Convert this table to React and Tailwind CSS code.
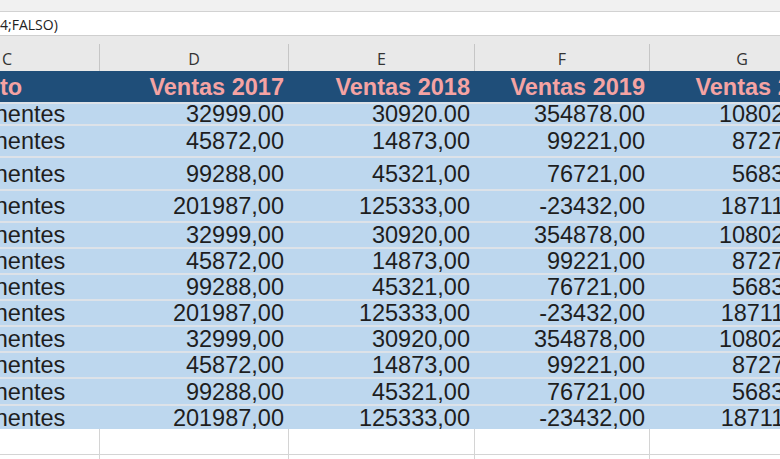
import React from 'react';

const cols = ['C', 'D', 'E', 'F', 'G'];
const headers = ['Producto', 'Ventas 2017', 'Ventas 2018', 'Ventas 2019', 'Ventas 2020'];

const rows = [
  { h: 'h-[20px]', d: ['32999.00', '30920.00', '354878.00', '108020.00'] },
  { h: 'h-[30px]', d: ['45872,00', '14873,00', '99221,00', '87271,00'] },
  { h: 'h-[31px]', d: ['99288,00', '45321,00', '76721,00', '56832,00'] },
  { h: 'h-[30px]', d: ['201987,00', '125333,00', '-23432,00', '187114,00'] },
  { h: 'h-[24px]', d: ['32999,00', '30920,00', '354878,00', '108020,00'] },
  { h: 'h-[24px]', d: ['45872,00', '14873,00', '99221,00', '87271,00'] },
  { h: 'h-[24px]', d: ['99288,00', '45321,00', '76721,00', '56832,00'] },
  { h: 'h-[24px]', d: ['201987,00', '125333,00', '-23432,00', '187114,00'] },
  { h: 'h-[24px]', d: ['32999,00', '30920,00', '354878,00', '108020,00'] },
  { h: 'h-[24px]', d: ['45872,00', '14873,00', '99221,00', '87271,00'] },
  { h: 'h-[25px]', d: ['99288,00', '45321,00', '76721,00', '56832,00'] },
  { h: 'h-[23px]', d: ['201987,00', '125333,00', '-23432,00', '187114,00'] },
];

const grid = 'grid grid-cols-[185px_189px_186px_175px_185px] -ml-[85px] w-[920px]';

export default function App() {
  return (
    <div className="w-[780px] h-[459px] overflow-hidden bg-white font-['Liberation_Sans',Arial,sans-serif]">
      {/* ribbon edge */}
      <div className="h-[12px] bg-[#f1f1f1] border-b border-[#d2d2d2]" />

      {/* formula bar */}
      <div className="h-[24px] bg-white border-b border-[#cfcfcf] flex items-center pt-[2px]">
        <span className="font-['Open_Sans',sans-serif] text-[14px] text-[#222] leading-none">4;FALSO)</span>
      </div>

      {/* column letters */}
      <div className="h-[35px] bg-[#e9e9e9] pt-[8px]">
        <div className={grid}>
          {cols.map((c) => (
            <div
              key={c}
              className="h-[27px] flex items-center justify-center border-r border-[#c6c6c6] pt-[3px] font-['Open_Sans',sans-serif] text-[16px] text-[#333]"
            >
              {c}
            </div>
          ))}
        </div>
      </div>

      {/* table header */}
      <div className={`${grid} h-[31px] bg-[#1f4e79]`}>
        {headers.map((t, i) => (
          <div
            key={t}
            className={`flex items-center pt-[2px] text-[23.5px] font-bold text-[#f5a3a3] leading-none ${i === 0 ? 'pl-[4px]' : 'justify-end pr-[5px]'}`}
          >
            {t}
          </div>
        ))}
      </div>

      {/* data */}
      {rows.map((r, ri) => (
        <div key={ri} className={`${grid} border-t-2 border-[#dde2e8] bg-[#bdd7ee]`}>
          <div className={`${r.h} flex items-center pt-[2px] pl-[4px] text-[23.5px] text-[#1e1e1e] leading-none`}>Componentes</div>
          {r.d.map((v, i) => (
            <div
              key={i}
              className={`${r.h} flex items-center justify-end pt-[2px] pr-[5px] text-[23.5px] text-[#1e1e1e] leading-none`}
            >
              {v}
            </div>
          ))}
        </div>
      ))}

      {/* empty sheet rows */}
      {[0, 1].map((k) => (
        <div key={k} className={`${grid} border-b border-[#d4d4d4]`}>
          {cols.map((c) => (
            <div key={c} className="h-[25px] border-r border-[#d4d4d4]" />
          ))}
        </div>
      ))}
    </div>
  );
}
